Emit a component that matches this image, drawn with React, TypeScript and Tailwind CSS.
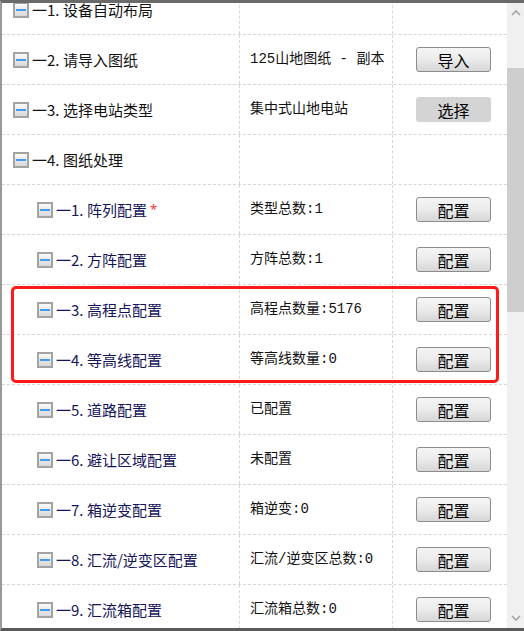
import React from 'react';

type Row = {
  level: 0 | 1;
  no: string;
  label: string;
  star?: boolean;
  value?: string;
  button?: string;
  flat?: boolean;
};

const rows: Row[] = [
  { level: 0, no: '1.', label: '设备自动布局' },
  { level: 0, no: '2.', label: '请导入图纸', value: '125山地图纸 - 副本', button: '导入' },
  { level: 0, no: '3.', label: '选择电站类型', value: '集中式山地电站', button: '选择', flat: true },
  { level: 0, no: '4.', label: '图纸处理' },
  { level: 1, no: '1.', label: '阵列配置', star: true, value: '类型总数:1', button: '配置' },
  { level: 1, no: '2.', label: '方阵配置', value: '方阵总数:1', button: '配置' },
  { level: 1, no: '3.', label: '高程点配置', value: '高程点数量:5176', button: '配置' },
  { level: 1, no: '4.', label: '等高线配置', value: '等高线数量:0', button: '配置' },
  { level: 1, no: '5.', label: '道路配置', value: '已配置', button: '配置' },
  { level: 1, no: '6.', label: '避让区域配置', value: '未配置', button: '配置' },
  { level: 1, no: '7.', label: '箱逆变配置', value: '箱逆变:0', button: '配置' },
  { level: 1, no: '8.', label: '汇流/逆变区配置', value: '汇流/逆变区总数:0', button: '配置' },
  { level: 1, no: '9.', label: '汇流箱配置', value: '汇流箱总数:0', button: '配置' },
];

const cjk = { fontFamily: '"Noto Sans CJK SC", sans-serif' };
const mono = { fontFamily: '"Liberation Mono", "Noto Sans CJK SC", monospace' };

function Collapse() {
  return (
    <span className="w-4 h-4 shrink-0 border-2 border-[#a3a3a3] bg-gradient-to-b from-[#fafafa] to-[#d8d8d8] flex items-center justify-center">
      <span className="block w-[10px] h-[2px] bg-[#3d9bf0]" />
    </span>
  );
}

function TreeRow({ row }: { row: Row }) {
  return (
    <div className="grid grid-cols-[238px_153px_1fr] h-[50px] border-b border-dashed border-[#d6d6d6]">
      <div
        className={`flex items-center border-r border-dashed border-[#d6d6d6] ${row.level === 0 ? 'pl-[11px]' : 'pl-[35px]'}`}
      >
        <Collapse />
        <span
          className={`ml-[3px] text-[15px] leading-none ${row.level === 0 ? 'text-[#111]' : 'text-[#14145a]'}`}
          style={cjk}
        >
          一{row.no} {row.label}
        </span>
        {row.star && <span className="ml-[3px] text-[#ff3030] text-[13px] leading-none">*</span>}
      </div>
      <div className="flex items-center pl-[10px] border-r border-dashed border-[#d6d6d6]">
        {row.value && (
          <span className="text-[14px] text-[#111] whitespace-nowrap" style={mono}>
            {row.value}
          </span>
        )}
      </div>
      <div className="flex items-center pl-[23px]">
        {row.button && (
          <button
            className={
              row.flat
                ? 'w-[75px] h-[25px] rounded-[3px] bg-[#d4d4d4] text-[16px] leading-none text-black'
                : 'w-[75px] h-[25px] rounded-[3px] border border-[#8c8c8c] bg-gradient-to-b from-[#f5f5f5] via-[#ebebeb] to-[#d6d6d6] text-[16px] leading-none text-black'
            }
            style={cjk}
          >
            {row.button}
          </button>
        )}
      </div>
    </div>
  );
}

function Scrollbar() {
  return (
    <div className="w-[17px] shrink-0 bg-[#f0f0f0] flex flex-col items-center">
      <div className="h-[20px] flex items-center justify-center">
        <svg width="10" height="6" viewBox="0 0 10 6">
          <path d="M1 5 L5 1 L9 5" fill="none" stroke="#a3a3a3" strokeWidth="1.6" />
        </svg>
      </div>
      <div className="mt-[45px] w-full h-[244px] bg-[#cdcdcd]" />
      <div className="flex-1" />
      <div className="h-[20px] flex items-center justify-center">
        <svg width="10" height="6" viewBox="0 0 10 6">
          <path d="M1 1 L5 5 L9 1" fill="none" stroke="#a3a3a3" strokeWidth="1.6" />
        </svg>
      </div>
    </div>
  );
}

export default function App() {
  return (
    <div className="relative w-[524px] h-[631px] bg-white border-t-[3px] border-b-[3px] border-l-2 border-t-[#6a6a6a] border-b-[#5a5a5a] border-l-[#9a9a9a] flex overflow-hidden">
      <div className="flex-1 overflow-hidden">
        <div className="-mt-[18px]">
          {rows.map((r, i) => (
            <TreeRow key={i} row={r} />
          ))}
        </div>
      </div>
      <Scrollbar />
      <div className="absolute left-[9px] top-[283px] w-[488px] h-[97px] border-[3px] border-[#ff1a1a] rounded-[5px] pointer-events-none" />
    </div>
  );
}
